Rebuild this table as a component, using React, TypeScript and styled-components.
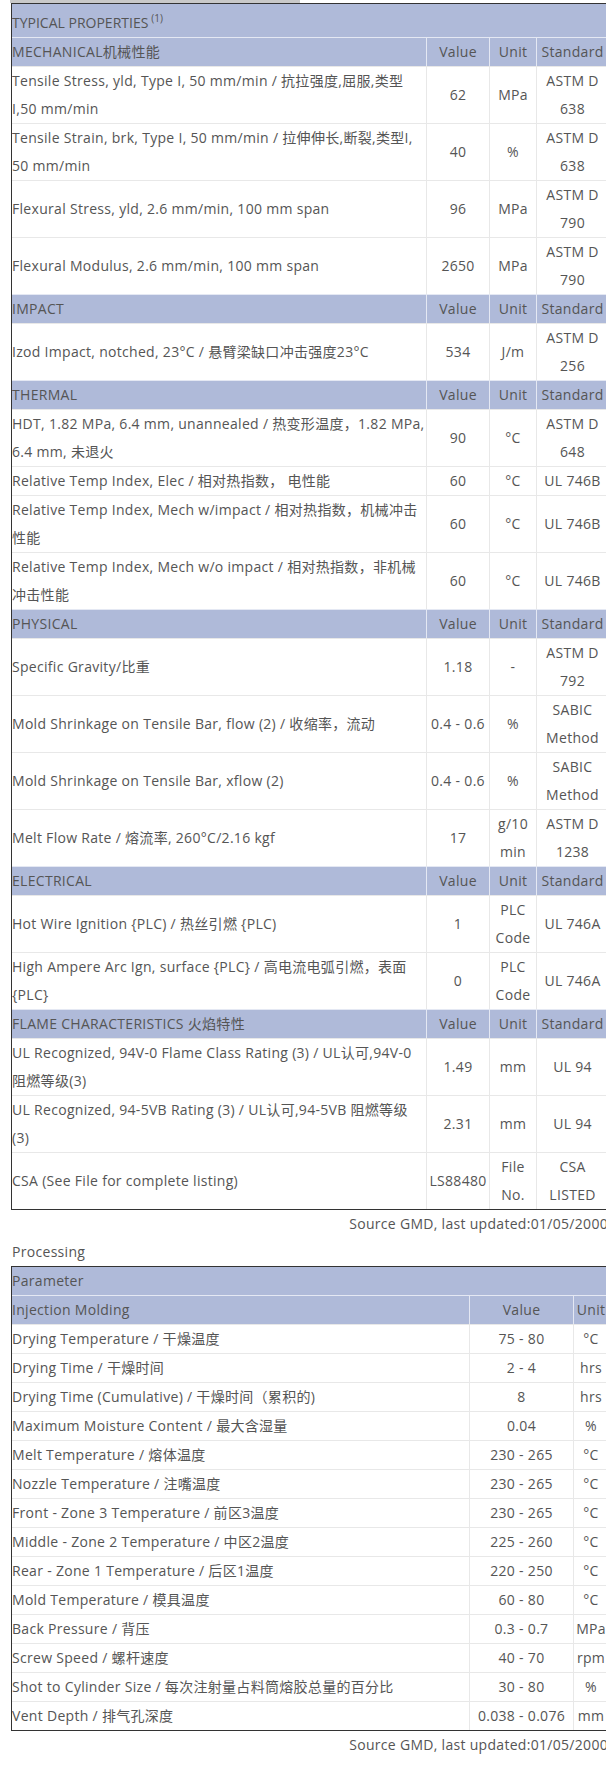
import React from 'react';
import styled, { createGlobalStyle } from 'styled-components';

const GlobalStyle = createGlobalStyle`
  html, body { margin: 0; padding: 0; background: #fff; }
  body {
    font-family: "Open Sans", "Noto Sans CJK SC", sans-serif;
    font-size: 14px;
    line-height: 28px;
    letter-spacing: 0.3px;
    color: #555;
    overflow: hidden;
  }
`;

const Page = styled.div`
  padding-left: 11px;
  width: 597px;
`;

const TabStrip = styled.div`
  height: 3px;
  margin-left: -1px;
  width: 290px;
  background: #c9c9c9;
`;

const DataTable = styled.table`
  width: 597px;
  border: 1px solid #333;
  border-spacing: 0;
  table-layout: fixed;
`;

const Row = styled.tr`
  &:first-child > * { border-top: none; }
`;

const Cell = styled.td<{ $center?: boolean }>`
  padding: ${p => (p.$center ? '0 1px' : '0 1px 0 0')};
  border-top: 1px solid #e8e8e8;
  border-left: 1px solid #e8e8e8;
  text-align: ${p => (p.$center ? 'center' : 'left')};
  vertical-align: middle;
  overflow-wrap: break-word;
  &:first-child { border-left: none; }
`;

const HeadCell = styled(Cell).attrs({ as: 'th' })`
  background: #afbad9;
  border-color: #e4e8f3;
  font-weight: normal;
`;

const TitleCell = styled(HeadCell)`
  padding-top: 5px;
  letter-spacing: 0;
`;

const Sup = styled.sup`
  font-size: 10px;
  line-height: 0;
  margin-left: 3px;
`;

const SourceNote = styled.p`
  margin: 0;
  text-align: right;
  white-space: nowrap;
`;

const SectionLabel = styled.p`
  margin: 0 0 0 1px;
`;

type PropRow = { label: string; value: string; unit: string; std: string };
type Section = { title: string; rows: PropRow[] };

const sections: Section[] = [
  {
    title: 'MECHANICAL机械性能',
    rows: [
      { label: 'Tensile Stress, yld, Type I, 50 mm/min / 抗拉强度,屈服,类型I,50 mm/min', value: '62', unit: 'MPa', std: 'ASTM D 638' },
      { label: 'Tensile Strain, brk, Type I, 50 mm/min / 拉伸伸长,断裂,类型I, 50 mm/min', value: '40', unit: '%', std: 'ASTM D 638' },
      { label: 'Flexural Stress, yld, 2.6 mm/min, 100 mm span', value: '96', unit: 'MPa', std: 'ASTM D 790' },
      { label: 'Flexural Modulus, 2.6 mm/min, 100 mm span', value: '2650', unit: 'MPa', std: 'ASTM D 790' },
    ],
  },
  {
    title: 'IMPACT',
    rows: [
      { label: 'Izod Impact, notched, 23°C / 悬臂梁缺口冲击强度23°C', value: '534', unit: 'J/m', std: 'ASTM D 256' },
    ],
  },
  {
    title: 'THERMAL',
    rows: [
      { label: 'HDT, 1.82 MPa, 6.4 mm, unannealed / 热变形温度，1.82 MPa, 6.4 mm, 未退火', value: '90', unit: '°C', std: 'ASTM D 648' },
      { label: 'Relative Temp Index, Elec / 相对热指数， 电性能', value: '60', unit: '°C', std: 'UL 746B' },
      { label: 'Relative Temp Index, Mech w/impact / 相对热指数，机械冲击性能', value: '60', unit: '°C', std: 'UL 746B' },
      { label: 'Relative Temp Index, Mech w/o impact / 相对热指数，非机械冲击性能', value: '60', unit: '°C', std: 'UL 746B' },
    ],
  },
  {
    title: 'PHYSICAL',
    rows: [
      { label: 'Specific Gravity/比重', value: '1.18', unit: '-', std: 'ASTM D 792' },
      { label: 'Mold Shrinkage on Tensile Bar, flow (2) / 收缩率，流动', value: '0.4 - 0.6', unit: '%', std: 'SABIC Method' },
      { label: 'Mold Shrinkage on Tensile Bar, xflow (2)', value: '0.4 - 0.6', unit: '%', std: 'SABIC Method' },
      { label: 'Melt Flow Rate / 熔流率, 260°C/2.16 kgf', value: '17', unit: 'g/10 min', std: 'ASTM D 1238' },
    ],
  },
  {
    title: 'ELECTRICAL',
    rows: [
      { label: 'Hot Wire Ignition {PLC) / 热丝引燃 {PLC)', value: '1', unit: 'PLC Code', std: 'UL 746A' },
      { label: 'High Ampere Arc Ign, surface {PLC} / 高电流电弧引燃，表面 {PLC}', value: '0', unit: 'PLC Code', std: 'UL 746A' },
    ],
  },
  {
    title: 'FLAME CHARACTERISTICS 火焰特性',
    rows: [
      { label: 'UL Recognized, 94V-0 Flame Class Rating (3) / UL认可,94V-0 阻燃等级(3)', value: '1.49', unit: 'mm', std: 'UL 94' },
      { label: 'UL Recognized, 94-5VB Rating (3) / UL认可,94-5VB 阻燃等级 (3)', value: '2.31', unit: 'mm', std: 'UL 94' },
      { label: 'CSA (See File for complete listing)', value: 'LS88480', unit: 'File No.', std: 'CSA LISTED' },
    ],
  },
];

type ProcRow = { label: string; value: string; unit: string };

const processing: ProcRow[] = [
  { label: 'Drying Temperature / 干燥温度', value: '75 - 80', unit: '°C' },
  { label: 'Drying Time / 干燥时间', value: '2 - 4', unit: 'hrs' },
  { label: 'Drying Time (Cumulative) / 干燥时间（累积的)', value: '8', unit: 'hrs' },
  { label: 'Maximum Moisture Content / 最大含湿量', value: '0.04', unit: '%' },
  { label: 'Melt Temperature / 熔体温度', value: '230 - 265', unit: '°C' },
  { label: 'Nozzle Temperature / 注嘴温度', value: '230 - 265', unit: '°C' },
  { label: 'Front - Zone 3 Temperature / 前区3温度', value: '230 - 265', unit: '°C' },
  { label: 'Middle - Zone 2 Temperature / 中区2温度', value: '225 - 260', unit: '°C' },
  { label: 'Rear - Zone 1 Temperature / 后区1温度', value: '220 - 250', unit: '°C' },
  { label: 'Mold Temperature / 模具温度', value: '60 - 80', unit: '°C' },
  { label: 'Back Pressure / 背压', value: '0.3 - 0.7', unit: 'MPa' },
  { label: 'Screw Speed / 螺杆速度', value: '40 - 70', unit: 'rpm' },
  { label: 'Shot to Cylinder Size / 每次注射量占料筒熔胶总量的百分比', value: '30 - 80', unit: '%' },
  { label: 'Vent Depth / 排气孔深度', value: '0.038 - 0.076', unit: 'mm' },
];

export default function App() {
  return (
    <>
      <GlobalStyle />
      <Page>
        <TabStrip />
        <DataTable>
          <colgroup>
            <col style={{ width: 414 }} />
            <col style={{ width: 63 }} />
            <col style={{ width: 47 }} />
            <col style={{ width: 72 }} />
          </colgroup>
          <tbody>
            <Row>
              <TitleCell colSpan={4}>
                TYPICAL PROPERTIES<Sup>(1)</Sup>
              </TitleCell>
            </Row>
            {sections.map(section => (
              <React.Fragment key={section.title}>
                <Row>
                  <HeadCell>{section.title}</HeadCell>
                  <HeadCell $center>Value</HeadCell>
                  <HeadCell $center>Unit</HeadCell>
                  <HeadCell $center>Standard</HeadCell>
                </Row>
                {section.rows.map(r => (
                  <Row key={r.label}>
                    <Cell>{r.label}</Cell>
                    <Cell $center>{r.value}</Cell>
                    <Cell $center>{r.unit}</Cell>
                    <Cell $center>{r.std}</Cell>
                  </Row>
                ))}
              </React.Fragment>
            ))}
          </tbody>
        </DataTable>
        <SourceNote>Source GMD, last updated:01/05/2000</SourceNote>
        <SectionLabel>Processing</SectionLabel>
        <DataTable>
          <colgroup>
            <col style={{ width: 457 }} />
            <col style={{ width: 104 }} />
            <col style={{ width: 35 }} />
          </colgroup>
          <tbody>
            <Row>
              <HeadCell colSpan={3}>Parameter</HeadCell>
            </Row>
            <Row>
              <HeadCell>Injection Molding</HeadCell>
              <HeadCell $center>Value</HeadCell>
              <HeadCell $center>Unit</HeadCell>
            </Row>
            {processing.map(r => (
              <Row key={r.label}>
                <Cell>{r.label}</Cell>
                <Cell $center>{r.value}</Cell>
                <Cell $center>{r.unit}</Cell>
              </Row>
            ))}
          </tbody>
        </DataTable>
        <SourceNote>Source GMD, last updated:01/05/2000</SourceNote>
      </Page>
    </>
  );
}
